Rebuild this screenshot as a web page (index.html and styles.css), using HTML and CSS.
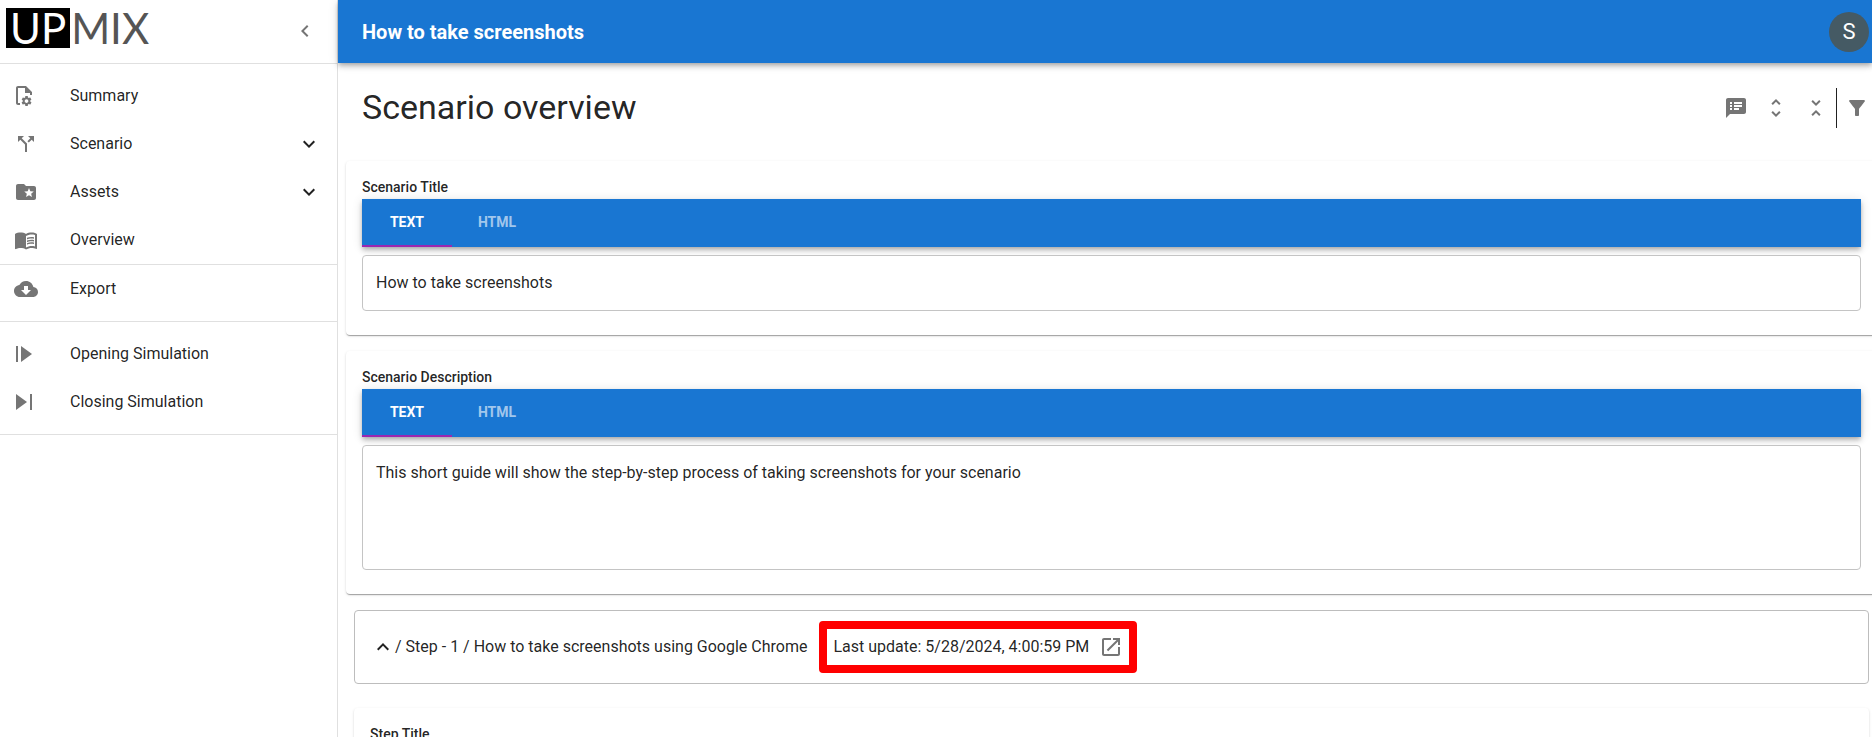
FILE: index.html
```html
<!DOCTYPE html>
<html lang="en">
<head>
<meta charset="utf-8">
<title>How to take screenshots</title>
<link rel="stylesheet" href="styles.css">
</head>
<body>
<div class="app">
  <aside class="sidebar">
    <div class="brand">
      <a class="logo" href="#"><span class="logo-up">UP</span><span class="logo-mix">MIX</span></a>
      <button class="icon-btn" type="button" aria-label="Collapse menu">
        <svg class="icon" viewBox="0 0 24 24"><path d="M15.41 7.41 14 6l-6 6 6 6 1.41-1.41L10.83 12z"/></svg>
      </button>
    </div>
    <nav class="nav">
      <ul class="group group-first">
        <li><a class="item" href="#">
          <svg class="icon" viewBox="2 0 24 24"><path d="M6 2c-1.100 0-2 .9-2 2v15c0 1.100.9 2 2 2h2v-2H6V4h7v5h5v2h2V8l-6-6z"/><path transform="translate(8.300 10.800) scale(.52)" d="M19.140 12.940c.040-.3.060-.61.060-.94 0-.32-.020-.64-.070-.94l2.030-1.580c.18-.14.23-.41.12-.61l-1.920-3.320c-.12-.22-.37-.29-.59-.22l-2.390.96c-.5-.38-1.030-.7-1.620-.94l-.36-2.540c-.040-.24-.24-.41-.48-.41h-3.840c-.24 0-.43.17-.47.41l-.36 2.540c-.59.24-1.130.57-1.620.94l-2.390-.96c-.22-.080-.47 0-.59.22L2.740 8.870c-.12.21-.080.47.12.61l2.030 1.580c-.050.3-.090.63-.090.94s.020.64.070.94l-2.030 1.580c-.18.14-.23.41-.12.61l1.920 3.320c.12.22.37.29.59.22l2.390-.96c.5.38 1.030.7 1.620.94l.36 2.540c.050.24.24.41.48.41h3.840c.24 0 .44-.17.47-.41l.36-2.540c.59-.24 1.130-.56 1.620-.94l2.390.96c.22.080.47 0 .59-.22l1.920-3.320c.12-.22.070-.47-.12-.61zM12 15.600c-1.980 0-3.600-1.620-3.600-3.600s1.620-3.600 3.600-3.600 3.600 1.620 3.600 3.600-1.620 3.600-3.600 3.600"/></svg>
          <span>Summary</span></a></li>
        <li><a class="item" href="#">
          <svg class="icon" viewBox="0 0 24 24"><path d="m14 4 2.290 2.290-2.880 2.880 1.420 1.420 2.880-2.880L20 10V4zm-4 0H4v6l2.290-2.290 4.710 4.700V20h2v-8.410l-5.290-5.300z"/></svg>
          <span>Scenario</span>
          <svg class="icon arrow" viewBox="0 0 24 24"><path d="M16.590 8.590 12 13.170 7.410 8.590 6 10l6 6 6-6z"/></svg></a></li>
        <li><a class="item" href="#">
          <svg class="icon" viewBox="0 0 24 24"><path d="M20 6h-8l-2-2H4c-1.100 0-1.990.9-1.990 2L2 18c0 1.100.9 2 2 2h16c1.100 0 2-.9 2-2V8c0-1.100-.9-2-2-2m-2.060 11L15 15.280 12.060 17l.78-3.330-2.590-2.240 3.410-.290L15 8l1.340 3.140 3.410.290-2.590 2.240z"/></svg>
          <span>Assets</span>
          <svg class="icon arrow" viewBox="0 0 24 24"><path d="M16.590 8.590 12 13.170 7.410 8.590 6 10l6 6 6-6z"/></svg></a></li>
        <li><a class="item" href="#">
          <svg class="icon" viewBox="0 0 24 24"><path d="M21 5c-1.110-.35-2.330-.5-3.500-.5-1.950 0-4.050.4-5.500 1.500-1.450-1.100-3.550-1.500-5.500-1.500S2.450 4.900 1 6v14.650c0 .25.250.5.500.5.100 0 .150-.05.250-.05C3.100 20.450 5.050 20 6.500 20c1.950 0 4.050.4 5.500 1.500 1.350-.85 3.800-1.500 5.500-1.500 1.650 0 3.350.3 4.750 1.050.100.050.150.050.250.050.250 0 .5-.25.5-.5V6c-.6-.45-1.250-.75-2-1m0 13.500c-1.100-.35-2.300-.5-3.500-.5-1.700 0-4.150.65-5.500 1.500V8c1.350-.85 3.800-1.500 5.500-1.500 1.200 0 2.400.15 3.500.5z"/><path d="M17.500 10.500c.88 0 1.730.09 2.500.26V9.240c-.79-.15-1.640-.24-2.500-.24-1.700 0-3.240.29-4.500.83v1.660c1.130-.64 2.700-.99 4.500-.99M13 12.490v1.660c1.130-.64 2.700-.99 4.500-.99.88 0 1.730.09 2.500.26V11.900c-.79-.15-1.640-.24-2.500-.24-1.700 0-3.240.3-4.500.83M17.500 14.330c-1.700 0-3.240.29-4.500.83v1.660c1.130-.64 2.700-.99 4.500-.99.88 0 1.730.09 2.500.26v-1.520c-.79-.16-1.640-.24-2.500-.24"/></svg>
          <span>Overview</span></a></li>
      </ul>
      <ul class="group group-export">
        <li><a class="item" href="#">
          <svg class="icon" viewBox="0 0 24 24"><path d="M19.350 10.040C18.670 6.590 15.640 4 12 4 9.110 4 6.600 5.640 5.350 8.040 2.340 8.360 0 10.910 0 14c0 3.310 2.690 6 6 6h13c2.760 0 5-2.240 5-5 0-2.640-2.050-4.780-4.650-4.960M17 13l-5 5-5-5h3V9h4v4z"/></svg>
          <span>Export</span></a></li>
      </ul>
      <ul class="group">
        <li><a class="item" href="#">
          <svg class="icon" viewBox="0 0 24 24"><path d="M2 4h2v16H2zM7 4v16l11-8z"/></svg>
          <span>Opening Simulation</span></a></li>
        <li><a class="item" href="#">
          <svg class="icon" viewBox="0 0 24 24"><path d="M2 4v16l11-8zM16 4h2v16h-2z"/></svg>
          <span>Closing Simulation</span></a></li>
      </ul>
    </nav>
  </aside>

  <div class="page">
    <header class="topbar">
      <span class="topbar-title">How to take screenshots</span>
      <button class="avatar" type="button" aria-label="Account">S</button>
    </header>
    <main class="content">
      <div class="heading">
        <h1>Scenario overview</h1>
        <div class="tools">
          <button class="icon-btn" type="button" aria-label="Notes"><svg class="icon" viewBox="0 0 24 24"><path d="M20 2H4c-1.100 0-1.990.9-1.990 2L2 22l4-4h14c1.100 0 2-.9 2-2V4c0-1.100-.9-2-2-2M8 14H6v-2h2zm0-3H6V9h2zm0-3H6V6h2zm7 6h-5v-2h5zm3-3h-8V9h8zm0-3h-8V6h8z"/></svg></button>
          <button class="icon-btn" type="button" aria-label="Expand all"><svg class="icon" viewBox="0 0 24 24"><path d="M12 5.830 15.170 9l1.410-1.410L12 3 7.410 7.590 8.830 9zm0 12.340L8.830 15l-1.410 1.410L12 21l4.590-4.590L15.170 15z"/></svg></button>
          <button class="icon-btn" type="button" aria-label="Collapse all"><svg class="icon" viewBox="0 0 24 24"><path d="M7.410 18.590 8.830 20 12 16.830 15.170 20l1.410-1.410L12 14zm9.180-13.180L15.170 4 12 7.170 8.830 4 7.410 5.410 12 10z"/></svg></button>
          <span class="rule"></span>
          <button class="icon-btn" type="button" aria-label="Filter"><svg class="icon" viewBox="0 0 24 24"><path d="M4.250 5.610C6.270 8.200 10 13 10 13v6c0 .55.45 1 1 1h2c.55 0 1-.45 1-1v-6s3.720-4.800 5.740-7.390c.51-.66.040-1.610-.79-1.610H5.040c-.83 0-1.300.95-.79 1.610"/></svg></button>
        </div>
      </div>

      <section class="card">
        <label class="label" for="scenario-title">Scenario Title</label>
        <div class="tabs" role="tablist">
          <button class="tab active" type="button" role="tab" aria-selected="true">TEXT</button>
          <button class="tab" type="button" role="tab" aria-selected="false">HTML</button>
        </div>
        <input class="field" id="scenario-title" type="text" value="How to take screenshots">
      </section>

      <section class="card">
        <label class="label" for="scenario-description">Scenario Description</label>
        <div class="tabs" role="tablist">
          <button class="tab active" type="button" role="tab" aria-selected="true">TEXT</button>
          <button class="tab" type="button" role="tab" aria-selected="false">HTML</button>
        </div>
        <textarea class="field" id="scenario-description" rows="4">This short guide will show the step-by-step process of taking screenshots for your scenario</textarea>
      </section>

      <div class="step">
        <div class="step-head">
          <button class="step-toggle" type="button" aria-label="Collapse step"><svg class="icon" viewBox="0 0 24 24"><path d="m12 8-6 6 1.410 1.410L12 10.830l4.590 4.580L18 14z"/></svg></button>
          <span>/ Step - 1 / How to take screenshots using Google Chrome</span>
          <span class="update">Last update: 5/28/2024, 4:00:59 PM
            <a class="open" href="#" aria-label="Open step"><svg class="icon" viewBox="0 0 24 24"><path d="M19 19H5V5h7V3H5c-1.110 0-2 .9-2 2v14c0 1.100.89 2 2 2h14c1.100 0 2-.9 2-2v-7h-2zM14 3v2h3.590l-9.830 9.830 1.410 1.410L19 6.410V10h2V3z"/></svg></a>
          </span>
        </div>
        <section class="card">
          <label class="label" for="step-title">Step Title</label>
        </section>
      </div>
    </main>
  </div>
</div>
</body>
</html>
```
FILE: styles.css
```css
* { box-sizing: border-box; }
body {
  margin: 0;
  font: 400 16px/24px Roboto, "Liberation Sans", sans-serif;
  color: rgba(0, 0, 0, 0.87);
  background: #fff;
}
button, input, textarea { font: inherit; color: inherit; }
button { border: 0; padding: 0; background: none; cursor: pointer; }
a { color: inherit; text-decoration: none; }
ul { list-style: none; margin: 0; padding: 0; }

.app { display: flex; height: 100vh; overflow: hidden; }
.icon { display: block; width: 24px; height: 24px; fill: #757575; flex: none; }
.icon-btn {
  display: flex; align-items: center; justify-content: center;
  width: 40px; height: 40px; color: #757575;
}

.sidebar { width: 338px; flex: none; border-right: 1px solid #e0e0e0; }
.brand {
  display: flex; justify-content: space-between; align-items: center;
  height: 64px; padding: 0 12px 1px 6px; border-bottom: 1px solid #e0e0e0;
}
.logo { display: flex; height: 40px; margin-bottom: 6px; font: 400 42px/40px Lato, sans-serif; }
.logo-up { background: #000; color: #fff; padding: 0 4px; }
.logo-mix { color: #555; padding-left: 1px; }

.group { padding: 8px 0; border-bottom: 1px solid #e0e0e0; }
.group-first { padding-bottom: 0; }
.group-export { padding-top: 0; }
.item { display: flex; align-items: center; height: 48px; padding: 0 16px 0 14px; gap: 32px; }
.item .arrow { margin-left: auto; fill: #212121; }

.page { flex: 1; min-width: 0; display: flex; flex-direction: column; }
.topbar {
  position: relative; flex: none;
  display: flex; align-items: center; justify-content: space-between;
  height: 63px; padding: 0 3px 0 24px;
  background: #1976d2; color: #fff;
  box-shadow: 0 2px 4px -1px rgba(0,0,0,.2), 0 4px 5px rgba(0,0,0,.14), 0 1px 10px rgba(0,0,0,.12);
}
.topbar-title { font-size: 20px; font-weight: 700; }
.avatar { width: 40px; height: 40px; border-radius: 50%; background: #455a64; font-size: 22px; line-height: 40px; }

.content { flex: 1; min-height: 0; overflow: hidden; padding-left: 8px; margin-right: -5px; }
.heading {
  display: flex; align-items: flex-start; justify-content: space-between;
  padding: 25px 0 33px 16px;
}
.heading h1 { margin: 0; font-size: 34px; line-height: 38px; font-weight: 400; }
.tools { display: flex; }
.rule { width: 1px; background: #212121; }

.card {
  display: flex; flex-direction: column;
  margin-bottom: 16px; padding: 16px 16px 24px;
  border-radius: 4px; background: #fff;
  box-shadow: 0 2px 1px -1px rgba(0,0,0,.2), 0 1px 1px rgba(0,0,0,.14), 0 1px 3px rgba(0,0,0,.12);
}
.label { padding-bottom: 2px; font-size: 14px; line-height: 20px; font-weight: 500; }
.tabs {
  display: flex; height: 48px; margin-bottom: 8px;
  background: #1976d2; color: #fff;
  box-shadow: 0 2px 4px -1px rgba(0,0,0,.2), 0 4px 5px rgba(0,0,0,.14), 0 1px 10px rgba(0,0,0,.12);
}
.tab { width: 90px; font-size: 14px; font-weight: 700; color: rgba(255,255,255,.6); border-bottom: 2px solid transparent; }
.tab.active { color: #fff; border-bottom-color: #9c27b0; }
.field {
  display: block; width: 100%; padding: 15px 13px;
  border: 1px solid #c4c4c4; border-radius: 4px; background: #fff; resize: none;
}
textarea.field { height: 125px; }

.step { padding: 0 8px; }
.step-head {
  display: flex; align-items: center;
  padding: 10px 16px; margin-bottom: 24px;
  border: 1px solid #bdbdbd; border-radius: 4px;
}
.step-toggle .icon { fill: #212121; }
.update {
  display: flex; align-items: center; gap: 10px;
  margin-left: 12px; padding: 6px;
  border: 8px solid #f00; border-radius: 4px;
}
```
